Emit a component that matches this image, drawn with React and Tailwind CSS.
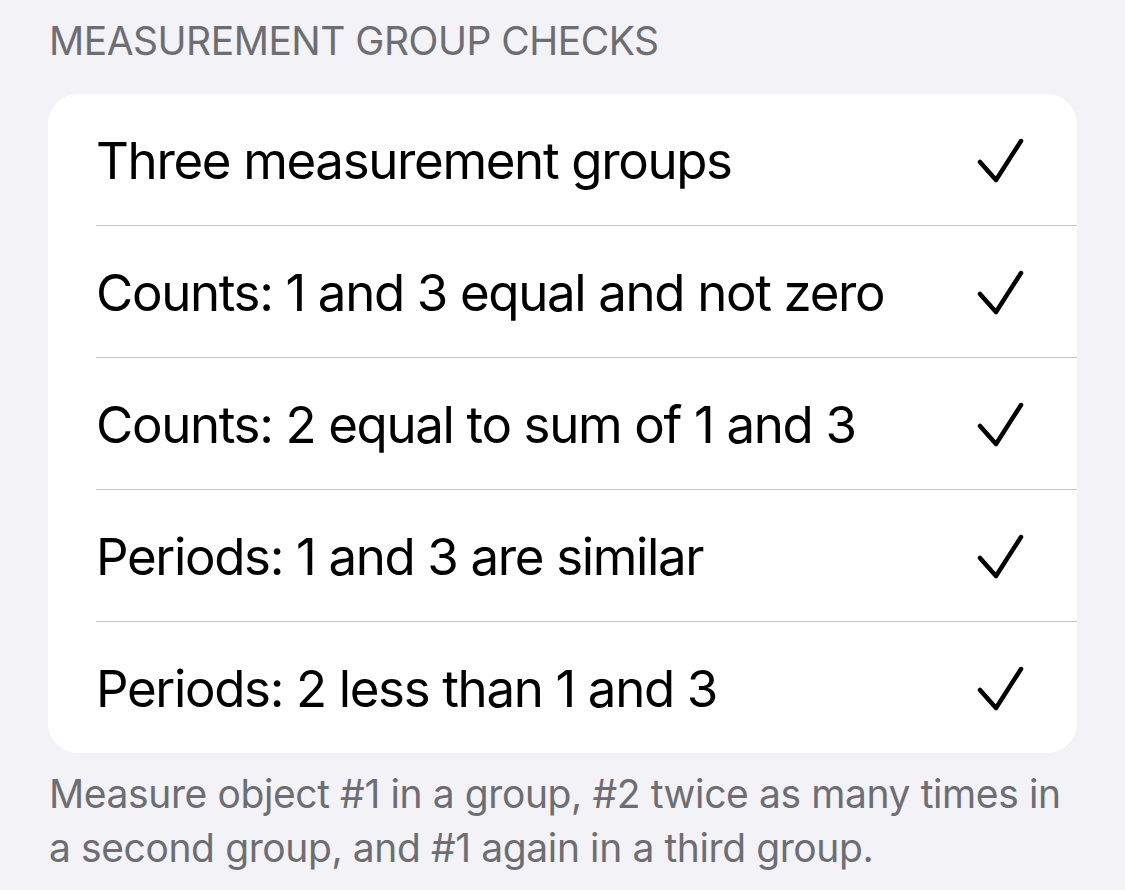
import React from 'react';

const checks = [
  'Three measurement groups',
  'Counts: 1 and 3 equal and not zero',
  'Counts: 2 equal to sum of 1 and 3',
  'Periods: 1 and 3 are similar',
  'Periods: 2 less than 1 and 3',
];

function Check() {
  return (
    <svg width="50" height="50" viewBox="0 0 50 50" fill="none" className="shrink-0">
      <path d="M4 26 L20 44 L45 5" stroke="#000" strokeWidth="4.5" strokeLinecap="round" strokeLinejoin="round" />
    </svg>
  );
}

export default function App() {
  return (
    <div className="min-h-screen w-full bg-[#f2f2f7] font-['Inter','Noto_Sans',sans-serif] antialiased">
      <div className="h-[94px] px-[49px] pt-[21px] text-[39px] leading-[39px] tracking-[-0.5px] text-[#6d6d72]">
        MEASUREMENT GROUP CHECKS
      </div>

      <div className="mx-[48px] overflow-hidden rounded-[30px] bg-white">
        {checks.map((label, i) => (
          <div key={label} className="pl-[48px]">
            <div className="flex h-[131px] items-center justify-between pr-[51px] pt-[2px]">
              <span className="text-[51px] leading-none tracking-[-1.35px] text-black">{label}</span>
              <Check />
            </div>
            {i < checks.length - 1 && <div className="h-px bg-[#c6c6c8]" />}
          </div>
        ))}
      </div>

      <p className="mt-[14px] px-[49px] text-[39px] leading-[54px] tracking-[-0.4px] text-[#6d6d72]">
        Measure object #1 in a group, #2 twice as many times in a second group, and #1 again in a third group.
      </p>
    </div>
  );
}
